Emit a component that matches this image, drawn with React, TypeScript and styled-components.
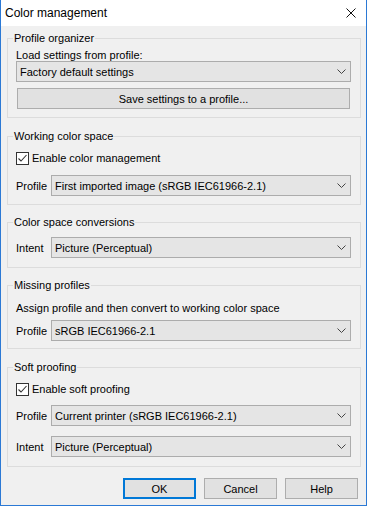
import React from "react";
import styled, { createGlobalStyle } from "styled-components";

const Global = createGlobalStyle`
  html, body { margin: 0; padding: 0; background: #f0f0f0; }
  body { font-family: "Liberation Sans", Arial, sans-serif; font-size: 11px; color: #000; }
  * { box-sizing: border-box; }
`;

const Window = styled.div`
  width: 367px;
  height: 506px;
  display: flex;
  flex-direction: column;
  border: 1px solid #2b79d5;
  border-top: none;
  background: #f0f0f0;
`;

const TitleBar = styled.div`
  height: 26px;
  flex: none;
  background: #fff;
  display: flex;
  align-items: center;
  justify-content: space-between;
  padding-left: 4px;
`;

const Title = styled.span`
  font-size: 12px;
  line-height: 16px;
  color: #000;
`;

const CloseButton = styled.div`
  width: 30px;
  height: 26px;
  display: flex;
  align-items: center;
  justify-content: center;
`;

const Body = styled.div`
  display: flex;
  flex-direction: column;
  padding: 4px 5px 0 6px;
`;

const Group = styled.fieldset<{ $mt: number; $pb: number }>`
  margin: ${(p) => p.$mt}px 0 0;
  padding: 0 9px ${(p) => p.$pb}px 8px;
  border: 1px solid #dcdcdc;
  min-width: 0;
  display: flex;
  flex-direction: column;
`;

const Legend = styled.legend`
  padding: 0 1px;
  margin-left: -3px;
  line-height: 17px;
  font-size: 11px;
`;

const Caption = styled.div<{ $mt: number; $h: number }>`
  margin-top: ${(p) => p.$mt}px;
  height: ${(p) => p.$h}px;
  line-height: ${(p) => p.$h}px;
  white-space: nowrap;
`;

const FieldRow = styled.div<{ $mt: number }>`
  margin-top: ${(p) => p.$mt}px;
  display: grid;
  grid-template-columns: 35px 1fr;
  align-items: center;
`;

const FieldLabel = styled.span`
  line-height: 14px;
`;

const Combo = styled.div<{ $mt?: number }>`
  margin-top: ${(p) => p.$mt ?? 0}px;
  height: 21px;
  border: 1px solid #acacac;
  background: #e5e5e5;
  display: flex;
  align-items: center;
  justify-content: space-between;
  padding: 0 4px 0 3px;
  white-space: nowrap;
`;

const ComboText = styled.span`
  line-height: 14px;
`;

const PushButton = styled.div<{ $mt?: number; $default?: boolean; $w?: number }>`
  margin-top: ${(p) => p.$mt ?? 0}px;
  ${(p) => (p.$w ? `width: ${p.$w}px; margin-left: 0; margin-right: 0;` : "margin-left: 1px; margin-right: 1px;")}
  height: 21px;
  border: ${(p) => (p.$default ? "2px solid #0078d7" : "1px solid #adadad")};
  background: #e1e1e1;
  display: flex;
  align-items: center;
  justify-content: center;
  line-height: 14px;
  white-space: nowrap;
`;

const CheckRow = styled.label<{ $mt: number }>`
  margin-top: ${(p) => p.$mt}px;
  height: 13px;
  display: flex;
  align-items: center;
  gap: 3px;
  line-height: 13px;
`;

const CheckBox = styled.span`
  width: 13px;
  height: 13px;
  flex: none;
  border: 1px solid #333;
  background: #fff;
  display: flex;
  align-items: center;
  justify-content: center;
`;

const Footer = styled.div`
  margin-top: 11px;
  display: flex;
  justify-content: flex-end;
  gap: 8px;
  padding-right: 8px;
`;

const Chevron = () => (
  <svg width="9" height="5" viewBox="0 0 9 5">
    <polyline points="0.5,0.5 4.5,4.5 8.5,0.5" fill="none" stroke="#444" strokeWidth="1" />
  </svg>
);

const Check = () => (
  <svg width="11" height="11" viewBox="0 0 11 11">
    <polyline points="1.5,5.5 4,8 9.5,2" fill="none" stroke="#333" strokeWidth="1.1" />
  </svg>
);

const Select = ({ value, mt }: { value: string; mt?: number }) => (
  <Combo $mt={mt}>
    <ComboText>{value}</ComboText>
    <Chevron />
  </Combo>
);

const Field = ({ label, value, mt }: { label: string; value: string; mt: number }) => (
  <FieldRow $mt={mt}>
    <FieldLabel>{label}</FieldLabel>
    <Select value={value} />
  </FieldRow>
);

const CheckOption = ({ label, mt }: { label: string; mt: number }) => (
  <CheckRow $mt={mt}>
    <CheckBox>
      <Check />
    </CheckBox>
    <span>{label}</span>
  </CheckRow>
);

export default function App() {
  return (
    <>
      <Global />
      <Window>
        <TitleBar>
          <Title>Color management</Title>
          <CloseButton>
            <svg width="10" height="10" viewBox="0 0 10 10">
              <path d="M0.5 0.5 L9.5 9.5 M9.5 0.5 L0.5 9.5" stroke="#111" strokeWidth="1" fill="none" />
            </svg>
          </CloseButton>
        </TitleBar>
        <Body>
          <Group $mt={0} $pb={8}>
            <Legend>Profile organizer</Legend>
            <Caption $mt={2} $h={12}>Load settings from profile:</Caption>
            <Select value="Factory default settings" />
            <PushButton $mt={6}>Save settings to a profile...</PushButton>
          </Group>
          <Group $mt={10} $pb={8}>
            <Legend>Working color space</Legend>
            <CheckOption label="Enable color management" mt={7} />
            <Field label="Profile" value="First imported image (sRGB IEC61966-2.1)" mt={10} />
          </Group>
          <Group $mt={9} $pb={9}>
            <Legend>Color space conversions</Legend>
            <Field label="Intent" value="Picture (Perceptual)" mt={6} />
          </Group>
          <Group $mt={9} $pb={7}>
            <Legend>Missing profiles</Legend>
            <Caption $mt={7} $h={14}>Assign profile and then convert to working color space</Caption>
            <Field label="Profile" value="sRGB IEC61966-2.1" mt={5} />
          </Group>
          <Group $mt={10} $pb={9}>
            <Legend>Soft proofing</Legend>
            <CheckOption label="Enable soft proofing" mt={7} />
            <Field label="Profile" value="Current printer (sRGB IEC61966-2.1)" mt={9} />
            <Field label="Intent" value="Picture (Perceptual)" mt={10} />
          </Group>
        </Body>
        <Footer>
          <PushButton $default $w={73}>OK</PushButton>
          <PushButton $w={73}>Cancel</PushButton>
          <PushButton $w={73}>Help</PushButton>
        </Footer>
      </Window>
    </>
  );
}
